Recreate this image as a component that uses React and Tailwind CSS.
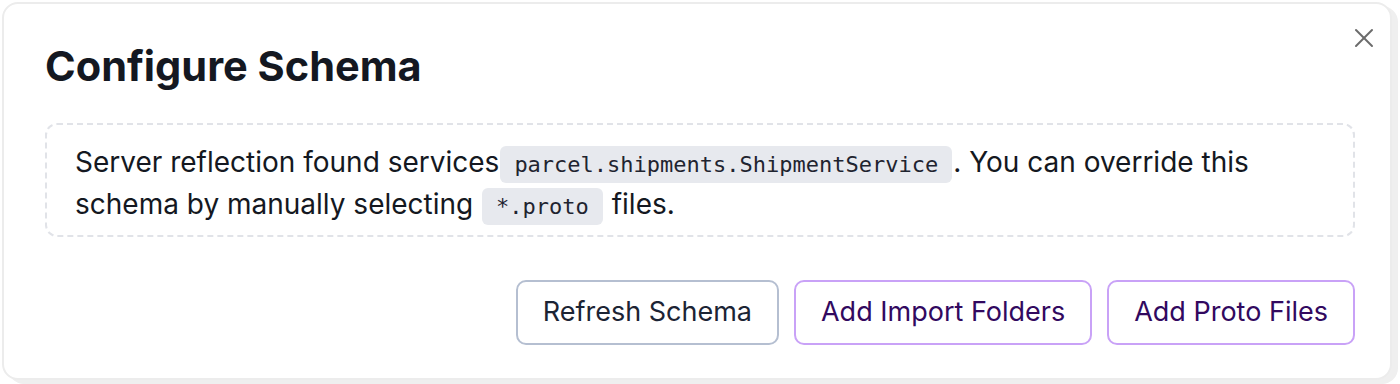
import React from 'react';
import { X } from 'lucide-react';

function Code({ children }) {
  return (
    <code className="mx-px inline-block rounded-md bg-[#e7e9ee] px-[14px] py-[3px] align-middle text-[22px] leading-[31px] text-[#1f2430] [font-family:'DejaVu_Sans_Mono','Liberation_Mono',monospace]">
      {children}
    </code>
  );
}

function ActionButton({ tone, children }) {
  const tones = {
    slate: 'border-[#b5bfd1] text-[#1c2434]',
    purple: 'border-[#c9a2f7] text-[#32095f]',
  };

  return (
    <button className={`h-[65px] rounded-[10px] border-2 bg-white px-[25px] text-[27px] ${tones[tone]}`}>
      {children}
    </button>
  );
}

export default function App() {
  return (
    <div className="h-[384px] w-[1400px] bg-white [font-family:Inter,'Noto_Sans',sans-serif]">
      <div className="relative ml-[2px] mt-[2px] h-[378px] w-[1390px] rounded-2xl border-2 border-[#ececec] bg-white pl-[41px] pr-[35px] pt-[36px] shadow-[6px_4px_0_#efefef]">
        <button className="absolute right-[10px] top-[18px] text-[#6b6b6b]">
          <X size={32} strokeWidth={1.5} />
        </button>

        <h2 className="text-[41.5px] font-bold leading-[52px] text-[#141821]">Configure Schema</h2>

        <div className="mt-[31px] rounded-xl border-2 border-dashed border-[#e1e3e8] px-[28px] pb-[10px] pt-[16px] text-[28px] leading-[42px] text-[#141821]">
          Server reflection found services<Code>parcel.shipments.ShipmentService</Code>. You can override this schema by manually selecting <Code>*.proto</Code> files.
        </div>

        <div className="mt-[43px] flex justify-end gap-[15px]">
          <ActionButton tone="slate">Refresh Schema</ActionButton>
          <ActionButton tone="purple">Add Import Folders</ActionButton>
          <ActionButton tone="purple">Add Proto Files</ActionButton>
        </div>
      </div>
    </div>
  );
}
